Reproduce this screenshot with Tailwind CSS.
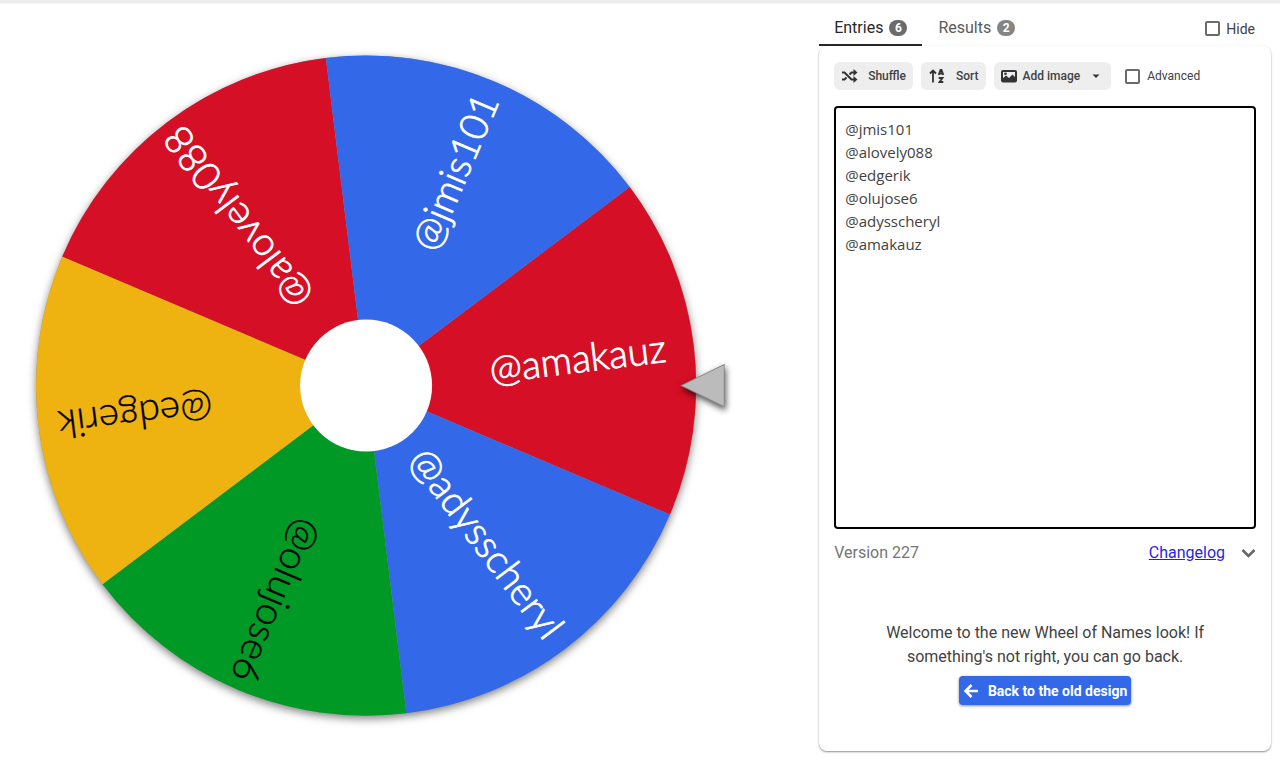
<!DOCTYPE html>
<html lang="en">
  <head>
    <meta charset="UTF-8" />
    <meta name="viewport" content="width=device-width, initial-scale=1.0" />
    <title>Wheel of Names</title>
    <script src="https://cdn.jsdelivr.net/npm/@tailwindcss/browser@4"></script>
  </head>
  <body class="bg-white font-['Roboto',sans-serif] text-[#424242]">
    <div class="flex min-h-screen flex-col">
      <div class="h-[3px] bg-[#ececec] shadow-[0_1px_1px_#f5f5f5]"></div>

      <main class="grid flex-1 grid-cols-[64fr_36fr]">
        <!-- Wheel -->
        <section aria-label="Wheel">
          <svg viewBox="0 0 819 757" class="w-full" role="img" aria-label="Wheel with 6 names">
            <g transform="translate(366 382.5)">
              <circle r="330" fill="#999" class="drop-shadow-[0_3px_4px_rgba(0,0,0,0.5)]" />
              <!-- six slices of 60 degrees -->
              <g transform="rotate(-7)">
                <path d="M0 0 285.8-165A330 330 0 0 1 285.8 165Z" fill="#d50f25" />
                <path d="M0 0 285.8-165A330 330 0 0 1 285.8 165Z" fill="#3369e8" transform="rotate(60)" />
                <path d="M0 0 285.8-165A330 330 0 0 1 285.8 165Z" fill="#009925" transform="rotate(120)" />
                <path d="M0 0 285.8-165A330 330 0 0 1 285.8 165Z" fill="#eeb211" transform="rotate(180)" />
                <path d="M0 0 285.8-165A330 330 0 0 1 285.8 165Z" fill="#d50f25" transform="rotate(240)" />
                <path d="M0 0 285.8-165A330 330 0 0 1 285.8 165Z" fill="#3369e8" transform="rotate(300)" />
              </g>
              <g class="font-['Lato',sans-serif] text-[39px] font-light" text-anchor="end" stroke-width="0.8">
                <g fill="#fff" stroke="#fff">
                  <text x="302" y="13" transform="rotate(-7)">@amakauz</text>
                  <text x="312" y="12" transform="rotate(53)">@adysscheryl</text>
                  <text x="320" y="12" transform="rotate(233)">@alovely088</text>
                  <text x="314" y="12" transform="rotate(293)">@jmis101</text>
                </g>
                <g fill="#000" stroke="#000" stroke-width="0.4">
                  <text x="320" y="12" transform="rotate(113)">@olujose6</text>
                  <text x="310" y="12" transform="rotate(173)">@edgerik</text>
                </g>
              </g>
              <circle r="66" fill="#fff" />
              <path d="M315 0 358-21V21Z" fill="#bbb" stroke="#8c8c8c" class="drop-shadow-[1px_3px_3px_rgba(0,0,0,0.7)]" />
            </g>
          </svg>
        </section>

        <!-- Side panel -->
        <aside class="flex flex-col pr-[9px] pb-[9px]">
          <div class="flex h-[43px] items-stretch pr-4">
            <button type="button" class="flex items-center gap-[6px] border-b-2 border-[#272727] px-[15px] pt-2 text-base text-[#272727]">
              Entries
              <span class="flex h-4 min-w-[18px] items-center justify-center rounded-full bg-[#6b6b6b] text-xs font-bold text-white">6</span>
            </button>
            <button type="button" class="flex items-center gap-[6px] border-b-2 border-transparent px-4 pt-2 text-base text-[#5a5a5a]">
              Results
              <span class="flex h-4 min-w-[18px] items-center justify-center rounded-full bg-[#858585] text-xs font-bold text-white">2</span>
            </button>
            <label class="ml-auto flex items-center gap-[6px] pt-2 text-sm">
              <input type="checkbox" class="size-[15px] appearance-none rounded-[2px] border-2 border-[#6b6b6b]" />
              Hide
            </label>
          </div>

          <div class="flex flex-1 flex-col rounded-lg px-[15px] pt-4 pb-[46px] shadow-[0_1px_2px_rgba(0,0,0,0.45)]">
            <div class="flex items-center gap-2 text-xs font-medium">
              <button type="button" class="flex h-7 items-center gap-[10px] rounded-md bg-[#eee] pr-[7px] pl-[6px]">
                <svg viewBox="0 0 18 18" class="size-[18px]" fill="none" stroke="#333" stroke-width="2">
                  <path d="M2 5.500H4.500L11.500 12.500H14M2 12.500H4.500L6.500 10.500M9.500 7.500 11.500 5.500H14" />
                  <path d="M13.500 2 17.500 5.500 13.500 9ZM13.500 9 17.500 12.500 13.500 16Z" fill="#333" stroke="none" />
                </svg>
                Shuffle
              </button>
              <button type="button" class="flex h-7 items-center gap-[10px] rounded-md bg-[#eee] px-[7px]">
                <svg viewBox="0 0 18 18" class="size-[18px]" fill="none" stroke="#333">
                  <path d="M5 15.500V4M2 6.500 5 3.500 8 6.500" stroke-width="1.800" />
                  <path d="M10.700 8 12.500 3H13.500L15.300 8M11.500 6.500H14.500M10.700 11H14.500L11.500 15H15.300" stroke-width="1.800" />
                </svg>
                Sort
              </button>
              <button type="button" class="flex h-7 items-center gap-[5px] rounded-md bg-[#eee] px-[6px]">
                <svg viewBox="0 0 18 18" class="size-[18px]" fill="none" stroke="#333" stroke-width="2">
                  <rect x="2" y="4" width="14" height="10.500" rx="1" />
                  <path d="M2 14V12L6 8.500 9 11 12.500 7.500 16 11V14Z" fill="#333" stroke="none" />
                  <circle cx="5.500" cy="6.800" r="1.300" fill="#333" stroke="none" />
                </svg>
                Add image
                <svg viewBox="0 0 18 18" class="ml-[2px] size-[18px]" fill="#333"><path d="M5.500 7.500H12.500L9 11Z" /></svg>
              </button>
              <label class="ml-[6px] flex items-center gap-[7px] font-normal">
                <input type="checkbox" class="size-[15px] appearance-none rounded-[2px] border-2 border-[#6b6b6b]" />
                Advanced
              </label>
            </div>

            <textarea aria-label="Entries" class="mt-4 min-h-40 w-full flex-1 resize-none rounded border-2 border-black px-[9px] py-[10px] font-['Open_Sans',sans-serif] text-[15px] leading-[23px] outline-none">
@jmis101
@alovely088
@edgerik
@olujose6
@adysscheryl
@amakauz</textarea>

            <div class="mt-3 flex items-center">
              <span class="text-[#757575]">Version 227</span>
              <a href="#" class="ml-auto text-[#2a1fe0] underline">Changelog</a>
              <button type="button" aria-label="Show more" class="ml-4">
                <svg viewBox="0 0 15 24" class="h-6 w-[15px]" fill="none" stroke="#666" stroke-width="2.500"><path d="M1.500 9 7.500 15 13.500 9" /></svg>
              </button>
            </div>

            <div class="mt-14 flex flex-col items-center px-10 text-center">
              <p>Welcome to the new Wheel of Names look! If something's not right, you can go back.</p>
              <button type="button" class="mt-[7px] flex h-[29px] items-center gap-[9px] rounded bg-[#3369e8] px-1 text-sm font-bold text-white shadow-[0_1px_3px_rgba(0,0,0,0.45)]">
                <svg viewBox="0 0 16 18" class="h-[18px] w-4" fill="none" stroke="#fff" stroke-width="2.500"><path d="M15 9H3M8.500 3 2.500 9 8.500 15" /></svg>
                Back to the old design
              </button>
            </div>
          </div>
        </aside>
      </main>
    </div>
  </body>
</html>
